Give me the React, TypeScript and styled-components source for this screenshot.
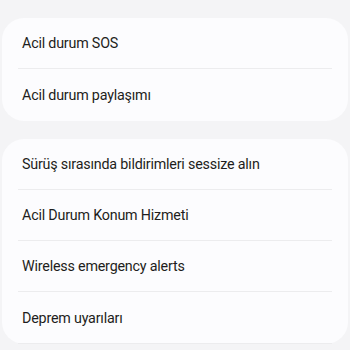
import styled, { createGlobalStyle } from 'styled-components';

const Global = createGlobalStyle`
  html, body {
    margin: 0;
    padding: 0;
    background: #f4f4f6;
  }
  body {
    font-family: Roboto, "Noto Sans", sans-serif;
    -webkit-font-smoothing: antialiased;
  }
`;

const Page = styled.div`
  width: 350px;
  height: 350px;
  overflow: hidden;
  box-sizing: border-box;
  padding: 18px 2px 0;
  display: flex;
  flex-direction: column;
  gap: 18px;
`;

const Card = styled.div`
  background: #fcfcfe;
  border-radius: 22px;
  padding: 0 16px;
  flex-shrink: 0;
`;

const Row = styled.div<{ $divider: boolean }>`
  height: 51.3px;
  box-sizing: border-box;
  display: flex;
  align-items: center;
  padding: 0 4px;
  font-size: 14.3px;
  letter-spacing: -0.2px;
  color: #1e1e20;
  border-bottom: ${({ $divider }) => ($divider ? '1px solid #ececee' : 'none')};
`;

const groups: { items: string[]; last: boolean }[] = [
  { items: ['Acil durum SOS', 'Acil durum paylaşımı'], last: false },
  {
    items: [
      'Sürüş sırasında bildirimleri sessize alın',
      'Acil Durum Konum Hizmeti',
      'Wireless emergency alerts',
      'Deprem uyarıları',
    ],
    last: true,
  },
];

export default function App() {
  return (
    <>
      <Global />
      <Page>
        {groups.map((g, gi) => (
          <Card key={gi}>
            {g.items.map((label, i) => (
              <Row key={label} $divider={g.last || i < g.items.length - 1}>
                {label}
              </Row>
            ))}
          </Card>
        ))}
      </Page>
    </>
  );
}
